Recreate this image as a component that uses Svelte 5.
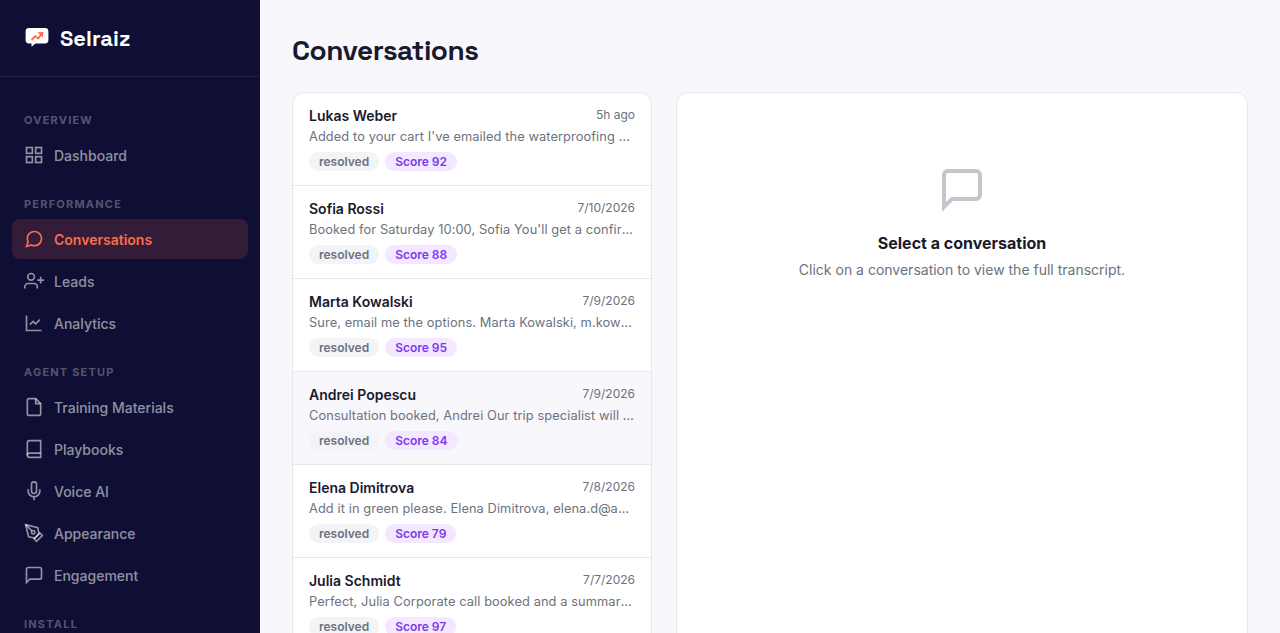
<script>
  const sections = [
    {
      label: "Overview",
      items: [{ name: "Dashboard", icon: "grid" }],
    },
    {
      label: "Performance",
      items: [
        { name: "Conversations", icon: "bubble" },
        { name: "Leads", icon: "leads" },
        { name: "Analytics", icon: "chart" },
      ],
    },
    {
      label: "Agent Setup",
      items: [
        { name: "Training Materials", icon: "file" },
        { name: "Playbooks", icon: "book" },
        { name: "Voice AI", icon: "mic" },
        { name: "Appearance", icon: "pen" },
        { name: "Engagement", icon: "message" },
      ],
    },
    {
      label: "Install",
      items: [],
    },
  ];

  const conversations = [
    { name: "Lukas Weber", date: "5h ago", preview: "Added to your cart I've emailed the waterproofing guide as well.", score: 92 },
    { name: "Sofia Rossi", date: "7/10/2026", preview: "Booked for Saturday 10:00, Sofia You'll get a confirmation by email.", score: 88 },
    { name: "Marta Kowalski", date: "7/9/2026", preview: "Sure, email me the options. Marta Kowalski, m.kowalski@mail.com", score: 95 },
    { name: "Andrei Popescu", date: "7/9/2026", preview: "Consultation booked, Andrei Our trip specialist will call you.", score: 84 },
    { name: "Elena Dimitrova", date: "7/8/2026", preview: "Add it in green please. Elena Dimitrova, elena.d@amail.com", score: 79 },
    { name: "Julia Schmidt", date: "7/7/2026", preview: "Perfect, Julia Corporate call booked and a summary is on its way.", score: 97 },
  ];

  let activePage = $state("Conversations");
  let highlighted = $state("Andrei Popescu");
</script>

{#snippet icon(name)}
  <svg class="icon" viewBox="0 0 24 24" aria-hidden="true">
    {#if name === "grid"}
      <rect x="3" y="3" width="7" height="7" />
      <rect x="14" y="3" width="7" height="7" />
      <rect x="14" y="14" width="7" height="7" />
      <rect x="3" y="14" width="7" height="7" />
    {:else if name === "bubble"}
      <path d="M21 11.5a8.38 8.38 0 0 1-.9 3.8 8.5 8.5 0 0 1-7.6 4.7 8.38 8.38 0 0 1-3.8-.9L3 21l1.9-5.7a8.38 8.38 0 0 1-.9-3.8 8.5 8.5 0 0 1 4.7-7.6 8.38 8.38 0 0 1 3.8-.9h.5a8.48 8.48 0 0 1 8 8v.5z" />
    {:else if name === "leads"}
      <path d="M16 21v-2a4 4 0 0 0-4-4H5a4 4 0 0 0-4 4v2" />
      <circle cx="8.5" cy="7" r="4" />
      <path d="M20 7v8M24 11h-8" />
    {:else if name === "chart"}
      <path d="M3 3v18h18" />
      <path d="M7 14l4-4 3 3 5-5" />
    {:else if name === "file"}
      <path d="M14 2H6a2 2 0 0 0-2 2v16a2 2 0 0 0 2 2h12a2 2 0 0 0 2-2V8z" />
      <path d="M14 2v6h6" />
    {:else if name === "book"}
      <path d="M4 19.5A2.5 2.5 0 0 1 6.5 17H20" />
      <path d="M6.5 2H20v20H6.5A2.5 2.5 0 0 1 4 19.5v-15A2.5 2.5 0 0 1 6.5 2z" />
    {:else if name === "mic"}
      <path d="M12 1a3 3 0 0 0-3 3v8a3 3 0 0 0 6 0V4a3 3 0 0 0-3-3z" />
      <path d="M19 10v2a7 7 0 0 1-14 0v-2M12 19v4" />
    {:else if name === "pen"}
      <path d="M12 19l7-7 3 3-7 7-3-3z" />
      <path d="M18 13l-1.5-7.5L2 2l3.5 14.5L13 18l5-5z" />
      <path d="M2 2l7.586 7.586" />
      <circle cx="11" cy="11" r="2" />
    {:else}
      <path d="M21 15a2 2 0 0 1-2 2H7l-4 4V5a2 2 0 0 1 2-2h14a2 2 0 0 1 2 2z" />
    {/if}
  </svg>
{/snippet}

<div class="app">
  <aside class="sidebar">
    <div class="brand">
      <svg class="logo" viewBox="0 0 26 26" aria-hidden="true">
        <path d="M5 3h16a3.4 3.4 0 0 1 3.4 3.4v8.6A3.4 3.4 0 0 1 21 18.4h-9.5l-4 3.4v-3.4H5A3.4 3.4 0 0 1 1.6 15V6.4A3.4 3.4 0 0 1 5 3z" fill="#fff" />
        <path d="M7.5 15l3.7-3.8 3 2.3 3.3-4.3" fill="none" stroke="#ff6b4a" stroke-width="1.9" />
        <path d="M13.5 7.3l6-.3-.7 5.6z" fill="#ff6b4a" />
      </svg>
      <span>Selraiz</span>
    </div>
    <nav>
      {#each sections as section}
        <div class="section">
          <div class="section-label">{section.label}</div>
          {#each section.items as item}
            <button
              type="button"
              class="nav-item"
              class:active={activePage === item.name}
              onclick={() => (activePage = item.name)}
            >
              {@render icon(item.icon)}
              <span>{item.name}</span>
            </button>
          {/each}
        </div>
      {/each}
    </nav>
  </aside>

  <main>
    <h1>Conversations</h1>
    <div class="columns">
      <div class="list">
        {#each conversations as conversation}
          <button
            type="button"
            class="row"
            class:highlighted={highlighted === conversation.name}
            onclick={() => (highlighted = conversation.name)}
          >
            <span class="row-head">
              <span class="name">{conversation.name}</span>
              <span class="date">{conversation.date}</span>
            </span>
            <span class="preview">{conversation.preview}</span>
            <span class="badges">
              <span class="badge">resolved</span>
              <span class="badge score">Score {conversation.score}</span>
            </span>
          </button>
        {/each}
      </div>

      <section class="detail">
        <svg class="empty-icon" viewBox="0 0 24 24" aria-hidden="true">
          <path d="M21 15a2 2 0 0 1-2 2H7l-4 4V5a2 2 0 0 1 2-2h14a2 2 0 0 1 2 2z" />
        </svg>
        <h2>Select a conversation</h2>
        <p>Click on a conversation to view the full transcript.</p>
      </section>
    </div>
  </main>
</div>

<style>
  :global(body) {
    margin: 0;
    overflow: hidden;
  }

  .app {
    display: flex;
    height: 100vh;
    overflow: hidden;
    background: #f8f7fc;
    color: #1a1a2e;
    font-family: Inter, "Liberation Sans", sans-serif;
  }

  button {
    border: none;
    background: none;
    font-family: inherit;
    text-align: left;
    cursor: pointer;
  }

  .sidebar {
    box-sizing: border-box;
    width: 260px;
    flex-shrink: 0;
    overflow: hidden;
    background: #0f0f35;
  }

  .brand {
    box-sizing: border-box;
    display: flex;
    align-items: center;
    gap: 10px;
    height: 77px;
    padding: 0 24px;
    border-bottom: 1px solid rgba(255, 255, 255, 0.08);
    color: #fff;
    font-family: "Space Grotesk", Inter, sans-serif;
    font-size: 22px;
    font-weight: 700;
  }

  .logo {
    width: 26px;
    height: 26px;
  }

  nav {
    padding: 24px 12px 0;
  }

  .section {
    display: flex;
    flex-direction: column;
    gap: 2px;
    margin-bottom: 10px;
  }

  .section-label {
    padding: 12px 12px 6px;
    color: rgba(255, 255, 255, 0.3);
    font-size: 11px;
    font-weight: 700;
    line-height: 14px;
    letter-spacing: 1.2px;
    text-transform: uppercase;
  }

  .nav-item {
    display: flex;
    align-items: center;
    gap: 10px;
    height: 40px;
    padding: 0 12px;
    border-radius: 8px;
    color: rgba(255, 255, 255, 0.55);
    font-size: 14px;
    font-weight: 500;
  }

  .nav-item span {
    padding-top: 1px;
  }

  .nav-item.active {
    background: rgba(255, 107, 74, 0.15);
    color: #ff6b4a;
    font-weight: 600;
  }

  .icon {
    width: 20px;
    height: 20px;
    overflow: hidden;
    fill: none;
    stroke: currentColor;
    stroke-width: 2;
  }

  main {
    flex: 1;
    min-width: 0;
    padding: 32px;
  }

  h1 {
    margin: 0 0 24px;
    font-family: "Space Grotesk", Inter, sans-serif;
    font-size: 28px;
    font-weight: 700;
    line-height: 36px;
    letter-spacing: -0.5px;
  }

  .columns {
    display: grid;
    grid-template-columns: 360px 1fr;
    gap: 24px;
    height: 620px;
  }

  .list,
  .detail {
    box-sizing: border-box;
    border: 1px solid #e5e7eb;
    border-radius: 12px;
    background: #fff;
    overflow: hidden;
  }

  .row {
    box-sizing: border-box;
    display: flex;
    flex-direction: column;
    width: 100%;
    height: 93px;
    padding: 14px 16px;
    border-bottom: 1px solid #e5e7eb;
    color: inherit;
  }

  .row.highlighted {
    background: #f8f7fc;
  }

  .row-head {
    display: flex;
    justify-content: space-between;
    line-height: 18px;
  }

  .name {
    font-size: 14px;
    font-weight: 600;
  }

  .date {
    color: #6b7280;
    font-size: 12px;
    line-height: 16px;
  }

  .preview {
    margin-top: 3px;
    overflow: hidden;
    color: #6b7280;
    font-size: 12.8px;
    line-height: 17px;
    letter-spacing: 0.1px;
    text-overflow: ellipsis;
    white-space: nowrap;
  }

  .badges {
    display: flex;
    gap: 6px;
    margin-top: 7px;
  }

  .badge {
    padding: 2px 10px;
    border-radius: 10px;
    background: #f3f4f6;
    color: #6b7280;
    font-size: 12px;
    font-weight: 600;
    line-height: 15px;
  }

  .badge.score {
    background: #f3e8ff;
    color: #7c3aed;
  }

  .detail {
    display: flex;
    flex-direction: column;
    align-items: center;
    padding-top: 72px;
  }

  .empty-icon {
    width: 48px;
    height: 48px;
    fill: none;
    stroke: #6b7280;
    stroke-width: 2;
    opacity: 0.4;
  }

  h2 {
    margin: 20px 0 7px;
    font-size: 16px;
    font-weight: 700;
    line-height: 20px;
  }

  p {
    margin: 0;
    color: #6b7280;
    font-size: 14px;
    line-height: 20px;
  }
</style>
